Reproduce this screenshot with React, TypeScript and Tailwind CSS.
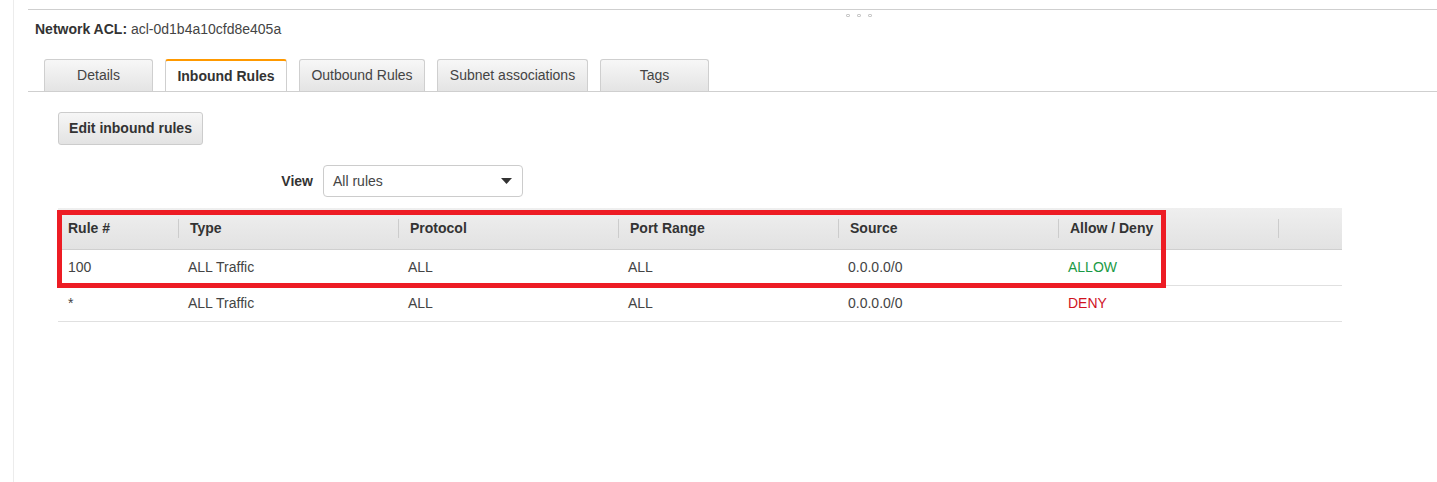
import React from "react";

const cols = [
  { label: "Rule #", w: "w-[120px]" },
  { label: "Type", w: "w-[220px]" },
  { label: "Protocol", w: "w-[220px]" },
  { label: "Port Range", w: "w-[220px]" },
  { label: "Source", w: "w-[220px]" },
  { label: "Allow / Deny", w: "w-[220px]" },
  { label: "", w: "w-[64px]" },
];

const rows = [
  { rule: "100", type: "ALL Traffic", proto: "ALL", port: "ALL", src: "0.0.0.0/0", action: "ALLOW" },
  { rule: "*", type: "ALL Traffic", proto: "ALL", port: "ALL", src: "0.0.0.0/0", action: "DENY" },
];

const tabs = [
  { label: "Details", w: "w-[109px]" },
  { label: "Inbound Rules", w: "w-[122px]", active: true },
  { label: "Outbound Rules", w: "w-[126px]" },
  { label: "Subnet associations", w: "w-[151px]" },
  { label: "Tags", w: "w-[109px]" },
];

export default function App() {
  return (
    <div
      className="relative flex h-[482px] w-[1437px] overflow-hidden bg-white text-[14px] text-[#444]"
      style={{ fontFamily: '"Liberation Sans", Arial, sans-serif' }}
    >
      <div className="w-[13px] shrink-0" />
      <div className="flex flex-1 flex-col border-l border-[#ececec] pl-[14px]">
        {/* top rule */}
        <div className="relative mt-[9px] border-t border-[#cfcfcf]">
          <div className="absolute left-[818px] top-[4px] flex gap-[7px]">
            <span className="block h-[3px] w-[4px] rounded-[1px] border border-[#c8c8c8]" />
            <span className="block h-[3px] w-[4px] rounded-[1px] border border-[#c8c8c8]" />
            <span className="block h-[3px] w-[4px] rounded-[1px] border border-[#c8c8c8]" />
          </div>
        </div>

        <div className="mt-[11px] pl-[7px] leading-[17px]">
          <span className="font-bold text-[#333]">Network ACL:</span>{" "}
          <span className="text-[#444]">acl-0d1b4a10cfd8e405a</span>
        </div>

        {/* tabs */}
        <div className="mt-[21px] flex gap-[12px] border-b border-[#cfcfcf] pl-[16px]">
          {tabs.map((t) =>
            t.active ? (
              <div
                key={t.label}
                className={`${t.w} flex h-[32px] items-center justify-center rounded-t-[3px] border-x border-t-2 border-x-[#cfcfcf] border-t-[#f90] bg-white pt-[1px] font-bold text-[#333]`}
              >
                {t.label}
              </div>
            ) : (
              <div
                key={t.label}
                className={`${t.w} flex h-[32px] items-center justify-center rounded-t-[3px] border-x border-t border-[#cfcfcf] bg-gradient-to-b from-[#f7f7f7] to-[#e4e4e4] text-[#444]`}
              >
                {t.label}
              </div>
            )
          )}
        </div>

        <div className="pl-[30px]">
          <button className="mt-[20px] flex h-[33px] w-[145px] items-center justify-center rounded-[3px] border border-[#cccccc] bg-gradient-to-b from-[#f6f6f6] to-[#e3e3e3] font-bold text-[#333]">
            Edit inbound rules
          </button>

          <div className="mt-[20px] flex items-center">
            <div className="w-[255px] text-right font-bold text-[#333]">View</div>
            <div className="ml-[10px] flex h-[32px] w-[200px] items-center justify-between rounded-[4px] border border-[#cccccc] bg-white pl-[9px] pr-[10px] text-[#444]">
              <span>All rules</span>
              <svg width="11" height="6" viewBox="0 0 11 6">
                <path d="M0 0 L11 0 L5.5 6 Z" fill="#333" />
              </svg>
            </div>
          </div>

          {/* table */}
          <div className="relative mt-[11px] w-[1284px]">
            <div className="flex h-[42px] border-b border-[#cfcfcf] bg-gradient-to-b from-[#efefef] to-[#e2e2e2]">
              {cols.map((c, i) => (
                <div key={i} className={`${c.w} flex h-full items-center font-bold text-[#333]`}>
                  {i === 0 ? (
                    <span className="pl-[10px]">{c.label}</span>
                  ) : (
                    <>
                      <span className="block h-[19px] w-px bg-[#cccccc]" />
                      <span className="pl-[11px]">{c.label}</span>
                    </>
                  )}
                </div>
              ))}
            </div>
            {rows.map((r, ri) => (
              <div key={ri} className="flex h-[36px] items-center border-b border-[#e0e0e0]">
                <div className="w-[120px] pl-[10px]">{r.rule}</div>
                <div className="w-[220px] pl-[10px]">{r.type}</div>
                <div className="w-[220px] pl-[10px]">{r.proto}</div>
                <div className="w-[220px] pl-[10px]">{r.port}</div>
                <div className="w-[220px] pl-[10px]">{r.src}</div>
                <div
                  className={`w-[220px] pl-[10px] ${
                    r.action === "ALLOW" ? "text-[#1a9a45]" : "text-[#d0131f]"
                  }`}
                >
                  {r.action}
                </div>
                <div className="w-[64px]" />
              </div>
            ))}
            {/* red annotation box */}
            <div className="pointer-events-none absolute left-[-1px] top-[2px] h-[78px] w-[1109px] border-[5px] border-[#ed1c24]" />
          </div>
        </div>
      </div>
    </div>
  );
}
